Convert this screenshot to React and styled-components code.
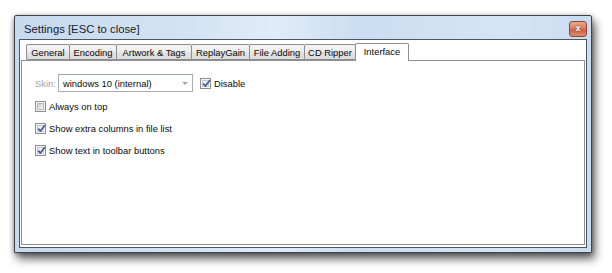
import React from "react";
import styled, { createGlobalStyle } from "styled-components";

const GlobalStyle = createGlobalStyle`
  html, body {
    margin: 0;
    padding: 0;
    background: #ffffff;
  }
  body {
    width: 612px;
    height: 273px;
    overflow: hidden;
    font-family: "Liberation Sans", Arial, sans-serif;
  }
  * {
    box-sizing: border-box;
  }
`;

const Window = styled.div`
  margin: 15px 0 0 14px;
  width: 578px;
  height: 238px;
  display: flex;
  flex-direction: column;
  border: 1px solid #3c434c;
  border-radius: 2px 2px 0 0;
  padding: 0 4px 4px 4px;
  background: linear-gradient(
    to right,
    #c6d9ee 0%,
    #d3e3f4 30%,
    #e0ecf8 45%,
    #cbddf1 60%,
    #d6e5f5 85%,
    #c9dcf0 100%
  );
  box-shadow: 3px 6px 10px rgba(0, 0, 0, 0.6), 0 1px 5px rgba(0, 0, 0, 0.35);
`;

const TitleBar = styled.div`
  height: 23px;
  padding-top: 2px;
  display: flex;
  align-items: center;
  justify-content: space-between;
`;

const Title = styled.div`
  font-size: 11.3px;
  color: #18212c;
  padding-left: 5px;
`;

const CloseButton = styled.div`
  width: 18px;
  height: 16px;
  border: 1px solid #8a4a3a;
  border-radius: 3px;
  background: linear-gradient(to bottom, #eba58d 0%, #dd7f62 45%, #cd6042 55%, #dc8a70 100%);
  display: flex;
  align-items: center;
  justify-content: center;
  color: #ffffff;
  font-size: 9px;
  font-weight: bold;
  line-height: 1;
  text-shadow: 0 0 2px #6a2a1a;
`;

const Client = styled.div`
  flex: 1;
  display: flex;
  flex-direction: column;
  border: 1px solid #4c5663;
  background: #ffffff;
  padding: 0 1px 2px 1px;
`;

const TabStrip = styled.div`
  display: flex;
  align-items: flex-end;
  height: 20px;
  padding: 2px 0 0 5px;
  position: relative;
  z-index: 1;
`;

const Tab = styled.div`
  width: ${(p) => p.$w}px;
  height: ${(p) => (p.$active ? 18 : 16)}px;
  margin-right: -1px;
  margin-bottom: ${(p) => (p.$active ? -1 : 0)}px;
  border: 1px solid #8c8e94;
  border-bottom: ${(p) => (p.$active ? "none" : "1px solid #8c8e94")};
  border-radius: 2px 2px 0 0;
  background: ${(p) =>
    p.$active
      ? "#ffffff"
      : "linear-gradient(to bottom, #f4f4f4 0%, #ececec 50%, #e2e2e2 51%, #dcdcdc 100%)"};
  display: flex;
  justify-content: center;
  align-items: ${(p) => (p.$active ? "flex-start" : "center")};
  padding-top: ${(p) => (p.$active ? 2 : 0)}px;
  font-size: 9.4px;
  color: #0a0a0a;
  white-space: nowrap;
`;

const Panel = styled.div`
  flex: 1;
  border: 1px solid #8c8e94;
  background: #ffffff;
  padding: 13px 13px 0 13px;
  display: flex;
  flex-direction: column;
  font-size: 9.4px;
  color: #0a0a0a;
`;

const SkinRow = styled.div`
  display: flex;
  align-items: center;
  height: 18px;
  margin-bottom: 3px;
`;

const Label = styled.div`
  width: 23px;
  color: #a3a3a3;
`;

const Combo = styled.div`
  width: 135px;
  height: 18px;
  border: 1px solid #abadb3;
  border-top-color: #9ea2aa;
  display: flex;
  align-items: center;
  justify-content: space-between;
  padding: 0 4px;
  margin-right: 7px;
  background: #ffffff;
`;

const Arrow = styled.div`
  width: 0;
  height: 0;
  border-left: 3px solid transparent;
  border-right: 3px solid transparent;
  border-top: 3px solid #a6a6a6;
`;

const CheckRow = styled.label`
  display: flex;
  align-items: center;
  height: ${(p) => (p.$inline ? 18 : 22)}px;
  gap: 3px;
`;

const Box = styled.span`
  width: 11px;
  height: 11px;
  border: 1px solid #8f8f8f;
  background: #f4f4f4;
  padding: 1px;
  display: inline-flex;
`;

const BoxInner = styled.span`
  flex: 1;
  background: ${(p) =>
    p.$checked
      ? "linear-gradient(135deg, #e4e8ee 0%, #f8f9fb 100%)"
      : "linear-gradient(135deg, #c9c9c9 0%, #e9e9e9 60%, #f3f3f3 100%)"};
  border: 1px solid ${(p) => (p.$checked ? "#c3c9d2" : "#b9b9b9")};
  position: relative;
`;

const CheckMark = styled.svg`
  position: absolute;
  left: -1px;
  top: -2px;
  width: 9px;
  height: 9px;
`;

const Checkbox = ({ checked, inline, children }) => (
  <CheckRow $inline={inline}>
    <Box>
      <BoxInner $checked={checked}>
        {checked && (
          <CheckMark viewBox="0 0 9 9">
            <path d="M1.2 4.6 L3.4 7 L7.8 1.2" fill="none" stroke="#3c5796" strokeWidth="1.6" />
          </CheckMark>
        )}
      </BoxInner>
    </Box>
    <span>{children}</span>
  </CheckRow>
);

const tabs = [
  ["General", 44],
  ["Encoding", 48],
  ["Artwork & Tags", 76],
  ["ReplayGain", 59],
  ["File Adding", 56],
  ["CD Ripper", 52],
  ["Interface", 54, true],
];

export default function App() {
  return (
    <>
      <GlobalStyle />
      <Window>
        <TitleBar>
          <Title>Settings [ESC to close]</Title>
          <CloseButton>x</CloseButton>
        </TitleBar>
        <Client>
          <TabStrip>
            {tabs.map(([name, w, active]) => (
              <Tab key={name} $w={w} $active={active}>
                {name}
              </Tab>
            ))}
          </TabStrip>
          <Panel>
            <SkinRow>
              <Label>Skin:</Label>
              <Combo>
                <span>windows 10 (internal)</span>
                <Arrow />
              </Combo>
              <Checkbox checked inline>
                Disable
              </Checkbox>
            </SkinRow>
            <Checkbox>Always on top</Checkbox>
            <Checkbox checked>Show extra columns in file list</Checkbox>
            <Checkbox checked>Show text in toolbar buttons</Checkbox>
          </Panel>
        </Client>
      </Window>
    </>
  );
}
